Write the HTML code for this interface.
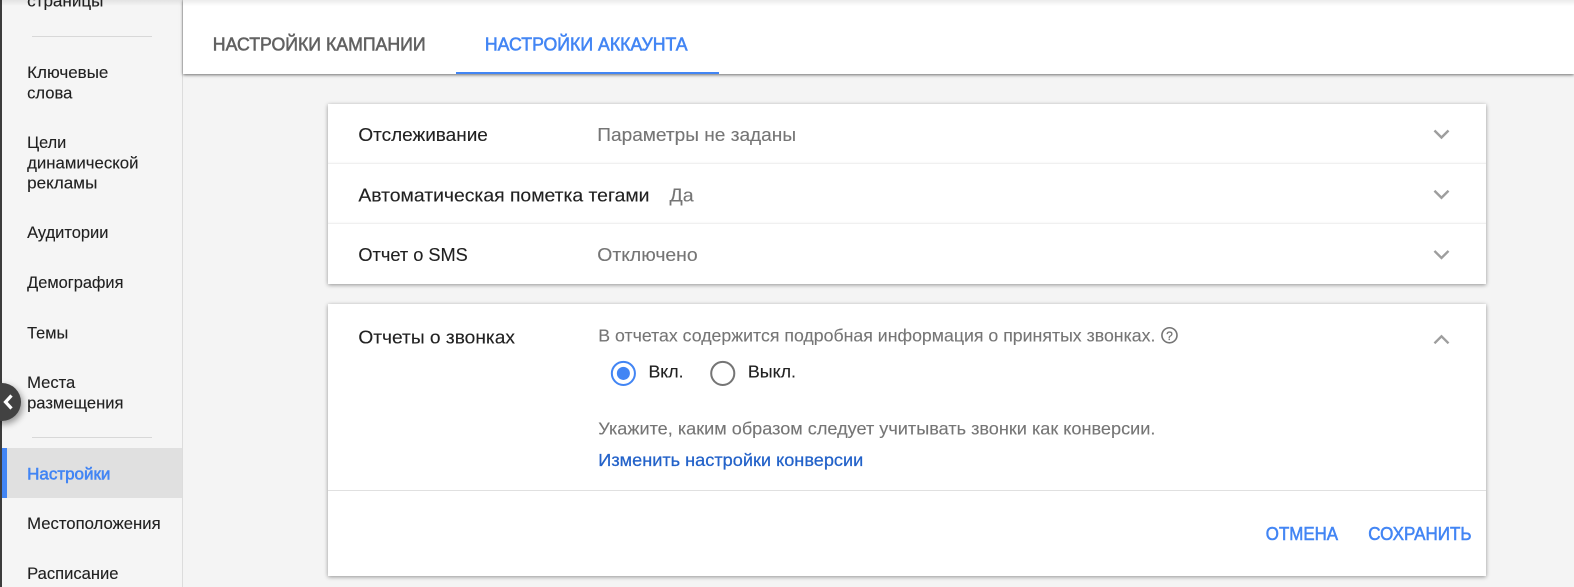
<!DOCTYPE html>
<html><head><meta charset="utf-8"><style>
html,body{margin:0;padding:0;background:#f4f4f4}
body{width:1574px;height:587px;overflow:hidden;position:relative;font-family:"Liberation Sans",sans-serif}
div{position:absolute}
svg{position:absolute;left:0;top:0}
text{font-family:"Liberation Sans",sans-serif}
.s{font-size:16.500px;fill:#212121;stroke:#212121;stroke-width:.12px}
.r{font-size:18px;fill:#212121;stroke:#212121;stroke-width:.12px}
.g{font-size:18px;fill:#757575;stroke:#757575;stroke-width:.12px}
.d{font-size:17.500px;fill:#757575;stroke:#757575;stroke-width:.12px}
.m{font-size:18px;fill:#4285f4;stroke:#4285f4;stroke-width:.55px}
</style></head><body>
<div style="left:0;top:0;width:182px;height:587px;background:#f5f5f5;border-right:1px solid #dcdcdc"></div>
<div style="left:0;top:0;width:2px;height:587px;background:#3c3c3c"></div>
<div style="left:2px;top:448px;width:180px;height:50px;background:#e0e0e0"></div>
<div style="left:2px;top:448px;width:5px;height:50px;background:#4285f4"></div>
<div style="left:32px;top:36px;width:120px;height:1px;background:#d8d8d8"></div>
<div style="left:32px;top:437px;width:120px;height:1px;background:#d8d8d8"></div>
<div style="left:183px;top:0;width:1391px;height:74px;background:#fff;box-shadow:0 1px 3px rgba(0,0,0,.55)"></div>
<div style="left:0;top:0;width:1574px;height:6px;background:linear-gradient(rgba(0,0,0,.08),rgba(0,0,0,0))"></div>
<div style="left:456px;top:72px;width:263px;height:2px;background:#4285f4"></div>
<div style="left:328px;top:104px;width:1158px;height:180px;background:#fff;box-shadow:0 1px 4px rgba(0,0,0,.4)"></div>
<div style="left:328px;top:163px;width:1158px;height:1px;background:#f0f0f0;box-shadow:0 -1px 1px rgba(0,0,0,.03)"></div>
<div style="left:328px;top:223px;width:1158px;height:1px;background:#f0f0f0;box-shadow:0 -1px 1px rgba(0,0,0,.03)"></div>
<div style="left:328px;top:304px;width:1158px;height:272px;background:#fff;box-shadow:0 1px 4px rgba(0,0,0,.4)"></div>
<div style="left:328px;top:490px;width:1158px;height:1px;background:#e0e0e0"></div>
<div style="left:-17px;top:382.500px;width:38px;height:38px;border-radius:50%;background:#424242;box-shadow:2px 3px 7px rgba(0,0,0,.4)"></div>
<svg width="1574" height="587" viewBox="0 0 1574 587"><path d="M11.500 395.500L5.500 402L11.500 408.500" fill="none" stroke="#fff" stroke-width="3.200"/></svg>
<svg width="1574" height="587" viewBox="0 0 1568 584.770">
<text class="s" x="27" y="6.500" textLength="76" lengthAdjust="spacingAndGlyphs">страницы</text>
<text class="s" x="27" y="77.500" textLength="81" lengthAdjust="spacingAndGlyphs">Ключевые</text>
<text class="s" x="27" y="98" textLength="45" lengthAdjust="spacingAndGlyphs">слова</text>
<text class="s" x="27" y="147.500" textLength="39" lengthAdjust="spacingAndGlyphs">Цели</text>
<text class="s" x="27" y="168" textLength="111" lengthAdjust="spacingAndGlyphs">динамической</text>
<text class="s" x="27" y="188" textLength="70" lengthAdjust="spacingAndGlyphs">рекламы</text>
<text class="s" x="27" y="237" textLength="81" lengthAdjust="spacingAndGlyphs">Аудитории</text>
<text class="s" x="27" y="287" textLength="96" lengthAdjust="spacingAndGlyphs">Демография</text>
<text class="s" x="27" y="337" textLength="41" lengthAdjust="spacingAndGlyphs">Темы</text>
<text class="s" x="27" y="386.500" textLength="48" lengthAdjust="spacingAndGlyphs">Места</text>
<text class="s" x="27" y="407" textLength="96" lengthAdjust="spacingAndGlyphs">размещения</text>
<text x="27" y="477.500" font-size="16.500" fill="#4285f4" stroke="#4285f4" stroke-width=".55" textLength="83" lengthAdjust="spacingAndGlyphs">Настройки</text>
<text class="s" x="27" y="527" textLength="133" lengthAdjust="spacingAndGlyphs">Местоположения</text>
<text class="s" x="27" y="577" textLength="91" lengthAdjust="spacingAndGlyphs">Расписание</text>
<text x="212" y="50.500" font-size="18" fill="#616161" stroke="#616161" stroke-width=".55" textLength="212" lengthAdjust="spacingAndGlyphs">НАСТРОЙКИ КАМПАНИИ</text>
<text class="m" x="483" y="50.500" textLength="202" lengthAdjust="spacingAndGlyphs">НАСТРОЙКИ АККАУНТА</text>
<text class="r" x="357" y="140.500" textLength="129" lengthAdjust="spacingAndGlyphs">Отслеживание</text>
<text class="g" x="595" y="140.500" textLength="198" lengthAdjust="spacingAndGlyphs">Параметры не заданы</text>
<text class="r" x="357" y="200.500" textLength="290" lengthAdjust="spacingAndGlyphs">Автоматическая пометка тегами</text>
<text class="g" x="667" y="200.500" textLength="24" lengthAdjust="spacingAndGlyphs">Да</text>
<text class="r" x="357" y="260" textLength="109" lengthAdjust="spacingAndGlyphs">Отчет о SMS</text>
<text class="g" x="595" y="260" textLength="100" lengthAdjust="spacingAndGlyphs">Отключено</text>
<text class="r" x="357" y="342" textLength="156" lengthAdjust="spacingAndGlyphs">Отчеты о звонках</text>
<text class="d" x="596" y="340" textLength="555" lengthAdjust="spacingAndGlyphs">В отчетах содержится подробная информация о принятых звонках.</text>
<circle cx="1165" cy="334" r="7.500" fill="none" stroke="#757575" stroke-width="1.600"/>
<text x="1165" y="338.500" font-size="12" fill="#757575" text-anchor="middle" stroke="#757575" stroke-width=".3">?</text>
<circle cx="621" cy="372" r="11.500" fill="none" stroke="#4285f4" stroke-width="2"/>
<circle cx="621" cy="372" r="6.500" fill="#4285f4"/>
<text x="646" y="376" font-size="17.500" fill="#212121" stroke="#212121" stroke-width=".12" textLength="35" lengthAdjust="spacingAndGlyphs">Вкл.</text>
<circle cx="720" cy="372" r="11.500" fill="none" stroke="#757575" stroke-width="2"/>
<text x="745" y="376" font-size="17.500" fill="#212121" stroke="#212121" stroke-width=".12" textLength="48" lengthAdjust="spacingAndGlyphs">Выкл.</text>
<text class="d" x="596" y="433" textLength="555" lengthAdjust="spacingAndGlyphs">Укажите, каким образом следует учитывать звонки как конверсии.</text>
<text x="596" y="464" font-size="17.500" fill="#2362c9" textLength="264" lengthAdjust="spacingAndGlyphs" stroke="#2362c9" stroke-width=".25">Изменить настройки конверсии</text>
<text class="m" x="1261" y="538" textLength="72" lengthAdjust="spacingAndGlyphs">ОТМЕНА</text>
<text class="m" x="1363" y="538" textLength="103" lengthAdjust="spacingAndGlyphs">СОХРАНИТЬ</text>
<g fill="none" stroke="#9e9e9e" stroke-width="2.400">
<path d="M1429 130L1436 137L1443 130"/>
<path d="M1429 190L1436 197L1443 190"/>
<path d="M1429 250L1436 257L1443 250"/>
<path d="M1429 342L1436 335L1443 342"/>
</g>
</svg>
</body></html>
